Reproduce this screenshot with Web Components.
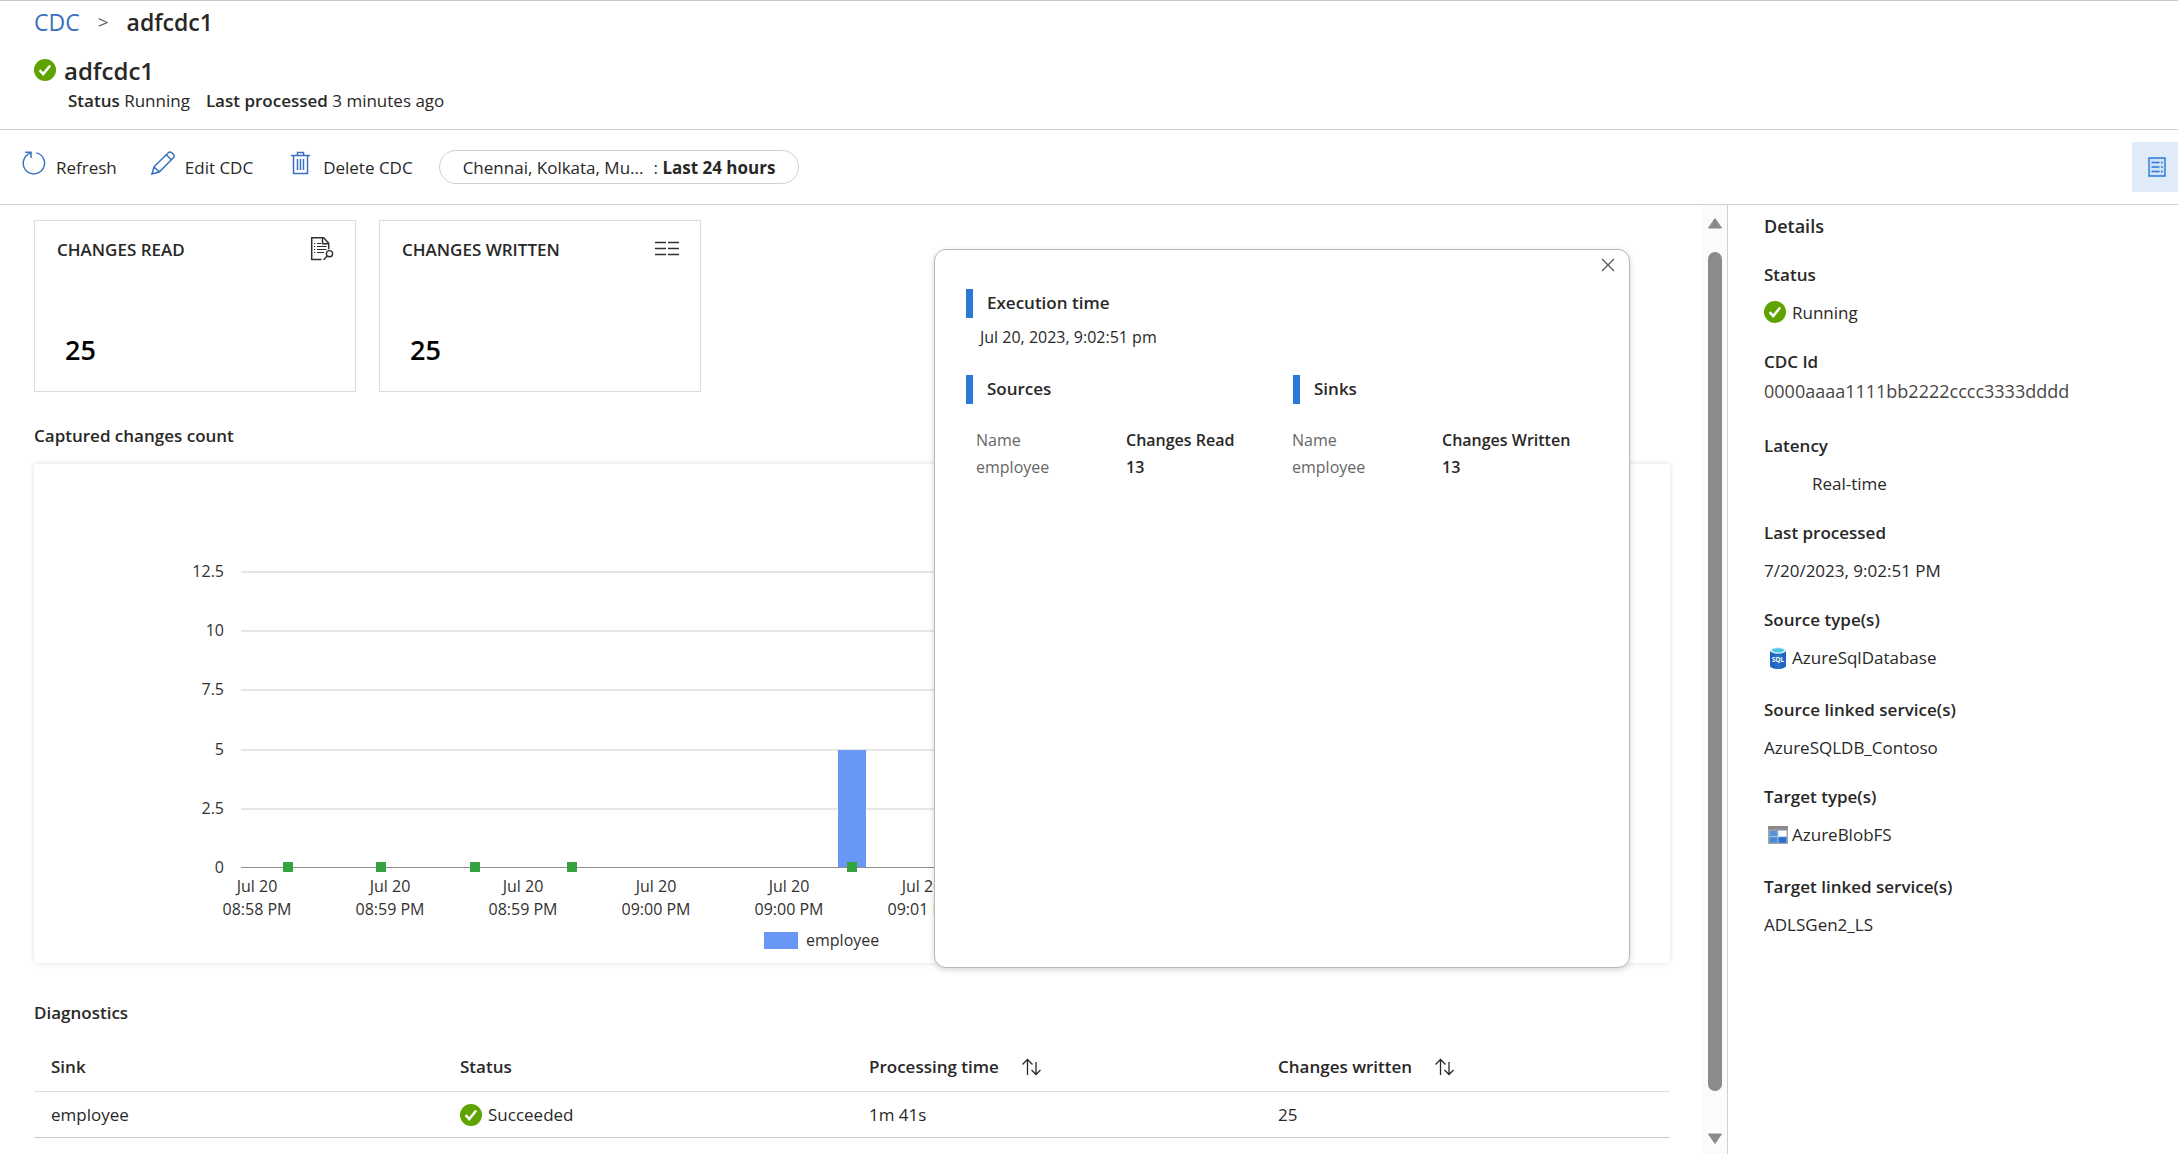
<!DOCTYPE html>
<html lang="en">
<head>
<meta charset="utf-8">
<title>adfcdc1 - CDC monitoring</title>
<style>
  html, body { margin: 0; height: 100%; }
  body { font: 17px/24px "Open Sans", "Noto Sans", sans-serif; color: #292827; background: #fff; overflow: hidden; }
</style>
</head>
<body>
<cdc-page></cdc-page>

<script>
const ICONS = {
  ok: ['22 22', '<circle cx="11" cy="11" r="11" fill="#5ea300"/><path d="M5.6 11.2l3.6 3.9 7-8.600" fill="none" stroke="#fff" stroke-width="2.5"/>'],
  refresh: ['24 24', '<path d="M14.5 1.6A11 11 0 1 1 8.4 1.9M3 1h6v6" transform="translate(.3 .3) scale(.97)" fill="none" stroke="#3570c0" stroke-width="1.5"/>'],
  edit: ['24 24', '<path d="M1 23l2-7.2L17.3 1.7a2.4 2.4 0 0 1 3.5 0l1.6 1.6a2.4 2.4 0 0 1 0 3.4L8.2 21zM3 15.8L8.2 21M15.3 3.8l5 5" fill="none" stroke="#3570c0" stroke-width="1.5"/>'],
  trash: ['26 24', '<path transform="translate(4 0)" d="M0 4.5h19M6.5 4V1.5h6V4M2.5 5v17.5h14V5M6.5 8v11M9.5 8v11M12.5 8v11" fill="none" stroke="#3b6fc4" stroke-width="1.5"/>'],
  panel: ['18 20', '<path d="M1 1h16v18H1z" fill="#cfe2f8" stroke="#2b78d6" stroke-width="1.4"/><path d="M3.5 5.5h8M3.5 10h8M3.5 14.5h8M13 5.5h1.8M13 10h1.8M13 14.5h1.8" stroke="#2b78d6" stroke-width="1.3"/>'],
  reader: ['24 24', '<path d="M11.5 22.5H1.7V.8h12l5 5.5v6M12.5.8v6h6" fill="none" stroke="#323130" stroke-width="1.5"/><path d="M4 6.5h1.2M7 6.5h4M4 9.5h1.2M7 9.5h9.5M4 12.5h1.2M7 12.5h9.5M4 15.5h1.2M7 15.5h7" stroke="#323130" stroke-width="1.2"/><circle cx="19.500" cy="16.7" r="3.1" fill="none" stroke="#323130" stroke-width="1.4"/><path d="M17.3 19L13.500 22.8" stroke="#323130" stroke-width="1.4"/>'],
  rows: ['24 16', '<path d="M0 1.5h11M13 1.5h11M0 7.5h11M13 7.5h11M0 13.5h11M13 13.5h11" stroke="#323130" stroke-width="1.5"/>'],
  close: ['14 14', '<path d="M1 1l12 12M13 1L1 13" stroke="#555" stroke-width="1.2"/>'],
  sort: ['22 18', '<path d="M6.5 17V1.5M1.5 6.5l5-5 5 5M15 4v12.5M10.5 12l4.5 4.5 4.5-4.5" fill="none" stroke="#292827" stroke-width="1.3"/>'],
  sql: ['16 22', '<path d="M0 3.5v15.3C0 20.6 3.6 22 8 22s8-1.400 8-3.200V3.500z" fill="#1d65c0"/><path d="M5 5h6v16.800H5z" fill="#2d7bd6" opacity=".5"/><ellipse cx="8" cy="3.500" rx="8" ry="3.200" fill="#e3eef5"/><ellipse cx="8" cy="3.300" rx="6" ry="2.100" fill="#44c8e6"/><text x="8" y="14.500" text-anchor="middle" font-family="Open Sans, sans-serif" font-size="6.500" font-weight="700" fill="#fff">SQL</text>'],
  blob: ['20 18', '<path d="M0 0h20v18H0z" fill="#a3a3a3"/><path d="M0 0h20v3.500H0z" fill="#8a8a8a"/><path d="M1.500 4.800h17v12h-17z" fill="#a9cdf0"/><path d="M1.500 4.800h8v5.400h-8z" fill="#5a93d8"/><path d="M10.500 4.800h8v5.400h-8z" fill="#fff"/><path d="M1.500 11.200h8v5.600h-8z" fill="#4a88d4"/><path d="M10.500 11.200h8v5.600h-8z" fill="#2a70c8"/>']
};

function define(name, html, setup) {
  const template = document.createElement('template');
  template.innerHTML = html;
  customElements.define(name, class extends HTMLElement {
    constructor() {
      super();
      this.attachShadow({ mode: 'open' }).append(template.content.cloneNode(true));
    }
    connectedCallback() { if (setup) setup(this, this.shadowRoot); }
  });
}

function makeIcon(name) {
  const icon = document.createElement('cdc-icon');
  icon.setAttribute('name', name);
  return icon;
}

define('cdc-icon', `<style>:host{display:inline-flex;flex:none}svg{display:block}</style>`, (el, root) => {
  const [size, body] = ICONS[el.getAttribute('name')];
  const [w, h] = size.split(' ');
  const svg = document.createElementNS('http://www.w3.org/2000/svg', 'svg');
  svg.setAttribute('width', w);
  svg.setAttribute('height', h);
  svg.setAttribute('viewBox', `0 0 ${w} ${h}`);
  svg.setAttribute('aria-hidden', 'true');
  svg.innerHTML = body;
  root.append(svg);
});

define('cdc-header', `
<style>
  :host { display: block; padding: 0 34px 15px; border-top: 1px solid #c8c8c8; border-bottom: 1px solid #d2d0ce; }
  nav { display: flex; align-items: center; gap: 18px; height: 42px; font-size: 23px; }
  nav a { color: #3a70c0; text-decoration: none; }
  nav span { font-size: 19px; color: #605e5c; }
  nav b, h1, b { font-weight: 600; }
  .title { display: flex; align-items: center; gap: 8px; height: 34px; margin-top: 11px; }
  .title cdc-icon { padding-bottom: 2px; }
  h1 { margin: 0; font-size: 24px; line-height: 34px; }
  .status { display: flex; gap: 16px; padding-left: 34px; line-height: 26px; }
</style>
<nav aria-label="Breadcrumb"><a href="#">CDC</a><span>&gt;</span><b>adfcdc1</b></nav>
<div class="title"><cdc-icon name="ok"></cdc-icon><h1>adfcdc1</h1></div>
<div class="status"><span><b>Status</b> Running</span><span><b>Last processed</b> 3 minutes ago</span></div>`);

define('cdc-command', `
<style>
  :host { display: block; }
  button { all: unset; display: flex; align-items: center; gap: 10px; cursor: pointer; }
  .icon { display: flex; padding-bottom: 8px; }
  .text { padding-top: 2px; }
</style>
<button type="button"><span class="icon"></span><span class="text"><slot></slot></span></button>`, (el, root) => {
  root.querySelector('.icon').append(makeIcon(el.getAttribute('icon')));
});

define('cdc-toolbar', `
<style>
  :host { display: flex; align-items: center; height: 74px; padding-left: 22px; border-bottom: 1px solid #d2d0ce; }
  .commands { display: flex; align-items: center; gap: 34px; flex: 1; }
  button { all: unset; box-sizing: border-box; cursor: pointer; }
  .pill { display: flex; align-items: center; height: 34px; padding: 2px 23px 0; margin-left: -8px; border: 1px solid #d2d0ce; border-radius: 17px; gap: 10px; }
  .pill b { font-weight: 700; }
  .toggle { display: flex; align-items: center; justify-content: flex-end; width: 46px; height: 50px; padding-right: 12px; background: #e0ebf9; }
</style>
<div class="commands">
  <cdc-command icon="refresh">Refresh</cdc-command>
  <cdc-command icon="edit">Edit CDC</cdc-command>
  <cdc-command icon="trash">Delete CDC</cdc-command>
  <button type="button" class="pill"><span>Chennai, Kolkata, Mu...</span><span>: <b>Last 24 hours</b></span></button>
</div>
<button type="button" class="toggle" aria-label="Toggle details"><cdc-icon name="panel"></cdc-icon></button>`);

define('metric-card', `
<style>
  :host { box-sizing: border-box; display: flex; flex-direction: column; justify-content: space-between; width: 322px; height: 172px; padding: 14px 21px 25px 22px; border: 1px solid #dddcda; }
  header { display: flex; justify-content: space-between; align-items: center; height: 30px; font-size: 17px; font-weight: 600; }
  .value { padding-left: 8px; font-size: 27px; line-height: 32px; font-weight: 600; color: #000; }
  ::slotted(cdc-icon) { padding-bottom: 3px; }
</style>
<header><slot name="title"></slot><slot name="icon"></slot></header>
<div class="value"><slot></slot></div>`);

define('changes-chart', `
<style>
  :host { display: block; height: 499px; background: #fff; box-shadow: 0 0 6px rgba(0,0,0,.12); }
  svg { display: block; width: 100%; height: 100%; overflow: hidden; }
  text { font-size: 16px; fill: #323130; }
</style>`, (el, root) => {
  const plotLeft = 207, base = 403, perUnit = 23.7;
  let out = '';
  [0, 2.5, 5, 7.5, 10, 12.5].forEach(v => {
    const y = Math.round(base - v * perUnit);
    out += `<rect x="${plotLeft}" y="${y}" width="1345" height="${v ? 2 : 1}" fill="${v ? '#e6e6e6' : '#8f8f8f'}"/>`;
    out += `<text x="190" y="${y + 6}" text-anchor="end">${v}</text>`;
  });
  ['08:58 PM', '08:59 PM', '08:59 PM', '09:00 PM', '09:00 PM', '09:01 PM'].forEach((time, i) => {
    const x = 223 + i * 133;
    out += `<text x="${x}" y="428" text-anchor="middle">Jul 20</text><text x="${x}" y="451" text-anchor="middle">${time}</text>`;
  });
  out += '<rect x="804" y="286" width="28" height="117" fill="#6997f6"/>';
  [254, 347, 441, 538, 818].forEach(x => { out += `<rect x="${x - 5}" y="398" width="10" height="10" fill="#37a340"/>`; });
  out += '<rect x="730" y="468" width="34" height="17" fill="#6997f6"/><text x="772" y="482">employee</text>';
  const svg = document.createElementNS('http://www.w3.org/2000/svg', 'svg');
  svg.setAttribute('role', 'img');
  svg.setAttribute('aria-label', 'Captured changes count');
  svg.innerHTML = out;
  root.append(svg);
});

define('diagnostics-table', `
<style>
  :host { display: block; }
  table { width: 100%; table-layout: fixed; border-collapse: separate; border-spacing: 0; }
  th, td { padding: 0 0 0 17px; text-align: left; border-bottom: 1px solid #dddcda; }
  th { height: 48px; font-weight: 600; }
  td { height: 45px; border-color: #cbcac8; }
  div { display: flex; align-items: center; gap: 6px; }
  button { all: unset; display: flex; margin-left: 16px; cursor: pointer; }
</style>
<table>
  <thead><tr>
    <th>Sink</th><th>Status</th>
    <th><div>Processing time<button type="button" aria-label="Sort by processing time"><cdc-icon name="sort"></cdc-icon></button></div></th>
    <th><div>Changes written<button type="button" aria-label="Sort by changes written"><cdc-icon name="sort"></cdc-icon></button></div></th>
  </tr></thead>
  <tbody><tr><td>employee</td><td><div><cdc-icon name="ok"></cdc-icon>Succeeded</div></td><td>1m 41s</td><td>25</td></tr></tbody>
</table>`);

define('marked-heading', `
<style>
  :host { display: block; height: 29px; border-left: 7px solid #2b78d6; padding-left: 14px; font-size: 17px; font-weight: 600; line-height: 28px; }
</style><slot></slot>`);

define('execution-popover', `
<style>
  :host { position: absolute; z-index: 2; box-sizing: border-box; display: block; width: 696px; height: 719px; padding: 39px 31px; background: #fff; border: 1px solid #b9b8b7; border-radius: 12px; box-shadow: 0 2px 6px rgba(0,0,0,.16); font-size: 16px; }
  .close { all: unset; position: absolute; top: 8px; right: 14px; display: flex; cursor: pointer; }
  .time { margin: 7px 0 26px 14px; }
  .columns { display: grid; grid-template-columns: 327px 1fr; }
  table { border-spacing: 0; margin: 22px 0 0 10px; }
  th, td { padding: 0; height: 27px; text-align: left; font-weight: 600; }
  th:first-child, td:first-child { width: 150px; font-weight: 400; color: #666; }
  .sinks { margin-left: -1px; }
</style>
<button type="button" class="close" aria-label="Close"><cdc-icon name="close"></cdc-icon></button>
<marked-heading>Execution time</marked-heading>
<div class="time">Jul 20, 2023, 9:02:51 pm</div>
<div class="columns">
  <section><marked-heading>Sources</marked-heading>
    <table><tr><th>Name</th><th>Changes Read</th></tr><tr><td>employee</td><td>13</td></tr></table></section>
  <section><marked-heading>Sinks</marked-heading>
    <table class="sinks"><tr><th>Name</th><th>Changes Written</th></tr><tr><td>employee</td><td>13</td></tr></table></section>
</div>`);

define('scroll-rail', `
<style>
  :host { display: flex; flex-direction: column; align-items: center; box-sizing: border-box; width: 24px; padding: 12px 0 9px; gap: 23px; background: #fbfbfb; }
  .thumb { flex: 1; width: 14px; border-radius: 7px; background: #8b8b8b; margin-bottom: 19px; }
  svg { display: block; }
</style>
<svg width="16" height="12"><path d="M8 1.500L14.500 11h-13z" fill="#8b8b8b" stroke="#8b8b8b" stroke-linejoin="round"/></svg>
<div class="thumb"></div>
<svg width="16" height="12"><path d="M8 10.500L14.500 1h-13z" fill="#8b8b8b" stroke="#8b8b8b" stroke-linejoin="round"/></svg>`);

define('detail-field', `
<style>
  :host { display: flex; flex-direction: column; gap: 14px; padding-bottom: 25px; }
  :host([tall]) { padding-bottom: 28px; }
  :host([tight]) { gap: 5px; padding-bottom: 31px; }
  :host([tight]) .value { font-size: 18px; color: #484644; }
  :host([indent]) .value { padding-left: 48px; }
  .label { font-weight: 600; }
  .value { display: flex; align-items: center; height: 24px; }
  .icon { display: flex; justify-content: center; width: 28px; }
  :host([icon="ok"]) .icon { justify-content: flex-start; padding-bottom: 3px; }
  :host(:not([icon])) .icon { display: none; }
</style>
<div class="label"><slot name="label"></slot></div>
<div class="value"><span class="icon"></span><slot></slot></div>`, (el, root) => {
  if (el.hasAttribute('icon')) root.querySelector('.icon').append(makeIcon(el.getAttribute('icon')));
});

define('details-panel', `
<style>
  :host { display: block; box-sizing: border-box; width: 451px; padding: 9px 0 0 36px; border-left: 1px solid #d2d0ce; }
  h2 { margin: 0 0 25px; font-size: 18px; line-height: 24px; font-weight: 600; }
</style>
<h2>Details</h2>
<detail-field icon="ok"><span slot="label">Status</span>Running</detail-field>
<detail-field tight><span slot="label">CDC Id</span>0000aaaa1111bb2222cccc3333dddd</detail-field>
<detail-field indent><span slot="label">Latency</span>Real-time</detail-field>
<detail-field><span slot="label">Last processed</span>7/20/2023, 9:02:51 PM</detail-field>
<detail-field icon="sql" tall><span slot="label">Source type(s)</span>AzureSqlDatabase</detail-field>
<detail-field><span slot="label">Source linked service(s)</span>AzureSQLDB_Contoso</detail-field>
<detail-field icon="blob" tall><span slot="label">Target type(s)</span>AzureBlobFS</detail-field>
<detail-field><span slot="label">Target linked service(s)</span>ADLSGen2_LS</detail-field>`);

define('cdc-page', `
<style>
  :host { display: flex; flex-direction: column; height: 100vh; }
  .body { display: flex; flex: 1; min-height: 0; }
  main { position: relative; flex: 1; min-width: 0; padding: 15px 33px 0 34px; }
  .cards { display: flex; gap: 23px; }
  h2 { margin: 32px 0 16px; font-size: 17px; line-height: 24px; font-weight: 600; }
  h2.second { margin: 38px 0 18px; }
  execution-popover { top: 44px; right: 73px; }
</style>
<cdc-header></cdc-header>
<cdc-toolbar></cdc-toolbar>
<div class="body">
  <main>
    <div class="cards">
      <metric-card><span slot="title">CHANGES READ</span><cdc-icon slot="icon" name="reader"></cdc-icon>25</metric-card>
      <metric-card><span slot="title">CHANGES WRITTEN</span><cdc-icon slot="icon" name="rows"></cdc-icon>25</metric-card>
    </div>
    <h2>Captured changes count</h2>
    <changes-chart></changes-chart>
    <h2 class="second">Diagnostics</h2>
    <diagnostics-table></diagnostics-table>
    <execution-popover></execution-popover>
  </main>
  <scroll-rail></scroll-rail>
  <details-panel></details-panel>
</div>`);
</script>
</body>
</html>
